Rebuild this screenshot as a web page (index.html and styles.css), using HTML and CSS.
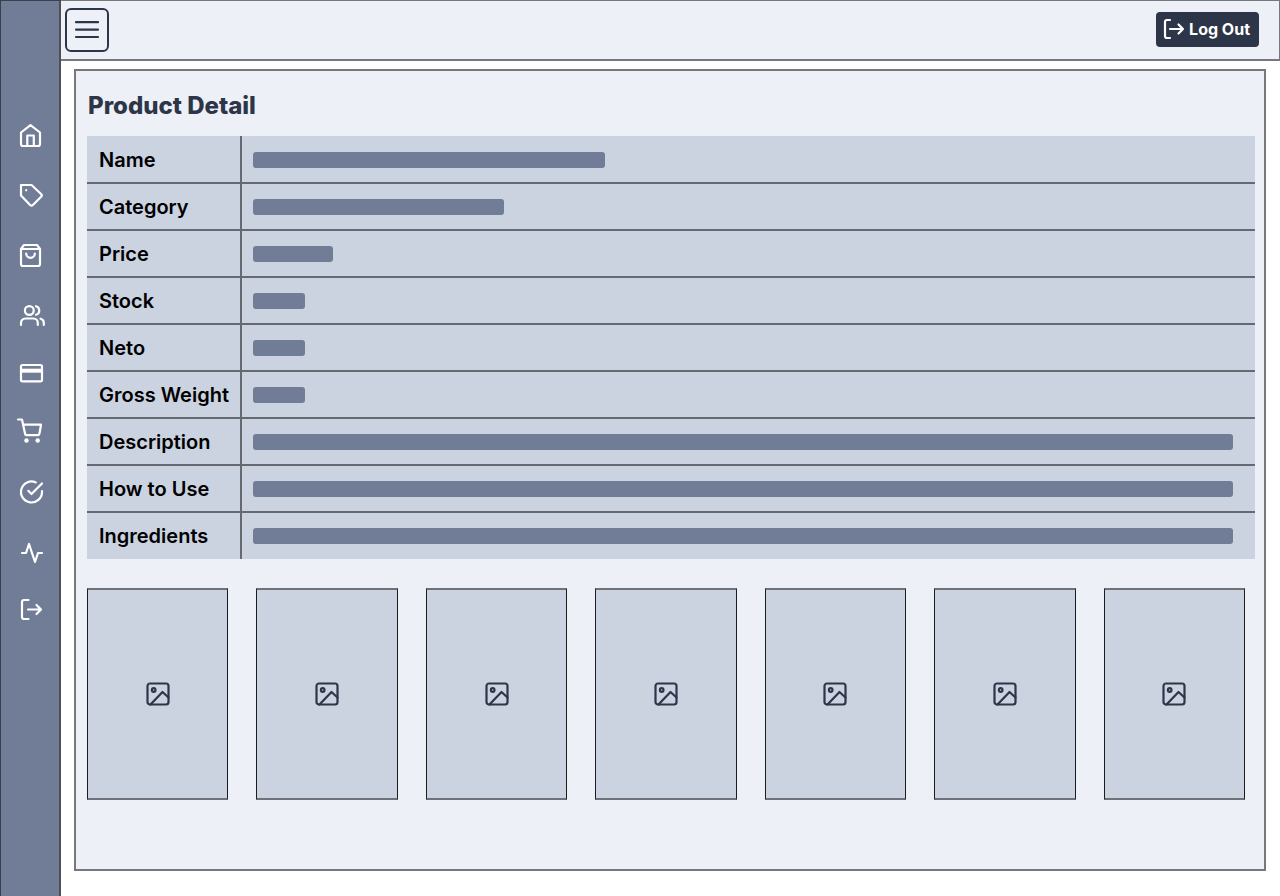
FILE: index.html
```html
<!DOCTYPE html>
<html lang="en">
<head>
<meta charset="utf-8">
<meta name="viewport" content="width=device-width, initial-scale=1">
<title>Product Detail</title>
<link rel="stylesheet" href="styles.css">
</head>
<body>
<div class="app">
  <nav class="sidebar" aria-label="Main">
    <a class="nav-link" href="#home" aria-label="Home"><svg class="nav-icon" viewBox="0 0 60 60"><path d="M21 27.500l9.500-7.300L40 27.500v11.500a2 2 0 0 1-2 2H23a2 2 0 0 1-2-2zM27.300 41V30.500h6.500V41"/></svg></a>
    <a class="nav-link" href="#tags" aria-label="Tags"><svg class="nav-icon" viewBox="0 0 60 60"><path d="M21 20h10.500l9.600 9a2 2 0 0 1 0 2.800l-8.200 8.200a2 2 0 0 1-2.800 0L21 30.500zM26.200 25.200v.1"/></svg></a>
    <a class="nav-link" href="#products" aria-label="Products"><svg class="nav-icon" viewBox="0 0 60 60"><path d="M24 20h13l3 4v15a2 2 0 0 1-2 2H23a2 2 0 0 1-2-2V24zM21 24h19M26.200 28.500a4.300 4.300 0 0 0 8.600 0"/></svg></a>
    <a class="nav-link" href="#customers" aria-label="Customers"><svg class="nav-icon" viewBox="0 0 60 60"><circle cx="29.300" cy="25.500" r="4.400"/><path d="M21 40v-2.200a4.300 4.300 0 0 1 4.300-4.300h8.200a4.300 4.300 0 0 1 4.300 4.300V40M36 21.200a4.400 4.400 0 0 1 0 8.500M40.500 33.700a4.300 4.300 0 0 1 3.300 4.200V40"/></svg></a>
    <a class="nav-link" href="#payments" aria-label="Payments"><svg class="nav-icon" viewBox="0 0 60 60"><rect x="21" y="20" width="21" height="16.300" rx="1.500"/><path class="stripe" d="M21 25.700h21"/></svg></a>
    <a class="nav-link" href="#cart" aria-label="Cart"><svg class="nav-icon" viewBox="0 0 60 60"><path d="M18 14.500h4l3 14a2 2 0 0 0 2 1.700h10.500a2 2 0 0 0 2-1.700L41 19.700H23"/><circle class="solid" cx="26.500" cy="35.500" r="2.200"/><circle class="solid" cx="37.700" cy="35.500" r="2.200"/></svg></a>
    <a class="nav-link" href="#approvals" aria-label="Approvals"><svg class="nav-icon" viewBox="0 0 60 60"><path d="M42 26v1a10.500 10.500 0 1 1-6.200-9.600M42 18.500L31.500 29l-3.200-3.200"/></svg></a>
    <a class="nav-link" href="#activity" aria-label="Activity"><svg class="nav-icon" viewBox="0 0 60 60"><path d="M22 28h4l3-9 6 18 3-9h4"/></svg></a>
    <a class="nav-link" href="#exit" aria-label="Exit"><svg class="nav-icon" viewBox="0 0 60 60"><path d="M28.500 15H24a2 2 0 0 0-2 2v15a2 2 0 0 0 2 2h4.500M28 24.500h13M36.500 20l4.500 4.500-4.500 4.500"/></svg></a>
  </nav>
  <div class="page">
    <header class="topbar">
      <button class="menu-button" type="button" aria-label="Menu"><svg width="26" height="26" viewBox="0 0 26 26"><path d="M2 5.200h22M2 12.600h22M2 20h22"/></svg></button>
      <button class="logout-button" type="button"><svg width="24" height="24" viewBox="0 0 24 24"><path d="M8 3H5a2 2 0 0 0-2 2v14a2 2 0 0 0 2 2h3M8 12h13M16.500 7.500L21 12l-4.500 4.500"/></svg>Log Out</button>
    </header>
    <main class="panel">
      <h1 class="title">Product Detail</h1>
      <table class="details">
        <tbody>
          <tr><th scope="row">Name</th><td><div class="bar bar-name"></div></td></tr>
          <tr><th scope="row">Category</th><td><div class="bar bar-category"></div></td></tr>
          <tr><th scope="row">Price</th><td><div class="bar bar-price"></div></td></tr>
          <tr><th scope="row">Stock</th><td><div class="bar bar-short"></div></td></tr>
          <tr><th scope="row">Neto</th><td><div class="bar bar-short"></div></td></tr>
          <tr><th scope="row">Gross Weight</th><td><div class="bar bar-short"></div></td></tr>
          <tr><th scope="row">Description</th><td><div class="bar"></div></td></tr>
          <tr><th scope="row">How to Use</th><td><div class="bar"></div></td></tr>
          <tr><th scope="row">Ingredients</th><td><div class="bar"></div></td></tr>
        </tbody>
      </table>
      <svg class="symbols" aria-hidden="true"><symbol id="picture" viewBox="0 0 26 26"><rect x="2.500" y="2.500" width="21" height="21" rx="2.500"/><circle cx="8.700" cy="9" r="1.800"/><path d="M23.500 16.500L17.500 11 5.500 23.500"/></symbol></svg>
      <div class="gallery">
        <div class="photo"><svg class="photo-icon"><use href="#picture"/></svg></div>
        <div class="photo"><svg class="photo-icon"><use href="#picture"/></svg></div>
        <div class="photo"><svg class="photo-icon"><use href="#picture"/></svg></div>
        <div class="photo"><svg class="photo-icon"><use href="#picture"/></svg></div>
        <div class="photo"><svg class="photo-icon"><use href="#picture"/></svg></div>
        <div class="photo"><svg class="photo-icon"><use href="#picture"/></svg></div>
        <div class="photo"><svg class="photo-icon"><use href="#picture"/></svg></div>
      </div>
    </main>
  </div>
</div>
</body>
</html>
```
FILE: styles.css
```css
* { box-sizing: border-box; }

body {
  margin: 0;
  background: #fff;
  color: #000;
  font-family: Inter, "Liberation Sans", sans-serif;
}

svg {
  display: block;
  fill: none;
  stroke: currentColor;
  stroke-width: 2.2;
  stroke-linecap: round;
  stroke-linejoin: round;
}

.app {
  display: flex;
  min-height: 100vh;
}

.sidebar {
  flex: none;
  width: 61px;
  padding-top: 104px;
  background: #717d96;
  border: 1px solid #393f4b;
  border-right: 2px solid #4b4f58;
  border-bottom: 0;
}

.nav-link {
  display: block;
  margin-left: -1px;
  color: #fff;
}

.nav-icon { width: 60px; height: 60px; }
.solid { fill: currentColor; stroke: none; }
.stripe { stroke-width: 4; stroke-linecap: butt; }

.page {
  flex: 1;
  min-width: 0;
  display: flex;
  flex-direction: column;
}

.topbar {
  display: flex;
  align-items: center;
  justify-content: space-between;
  height: 61px;
  padding: 0 20px 0 4px;
  background: #edf0f7;
  border: 1px solid #77787c;
  border-left: 0;
  border-bottom-width: 2px;
}

.menu-button {
  display: grid;
  place-items: center;
  width: 44px;
  height: 44px;
  padding: 0;
  border: 2px solid #2d3648;
  border-radius: 6px;
  background: transparent;
  color: #2d3648;
}

.logout-button {
  display: flex;
  align-items: center;
  gap: 3px;
  height: 35px;
  margin-bottom: 2px;
  padding: 0 9px 0 6px;
  border: 0;
  border-radius: 4px;
  background: #2d3648;
  color: #fff;
  font: 700 16px/24px Inter, "Liberation Sans", sans-serif;
}

.panel {
  flex: 1;
  margin: 8px 14px 25px 13px;
  padding: 20px 9px 20px 11px;
  background: #edf0f7;
  border: 2px solid #77787c;
}

.title {
  margin: 0 0 15px 1px;
  color: #2d3648;
  font-size: 24px;
  line-height: 30px;
  font-weight: 800;
}

.details {
  width: 100%;
  border-collapse: collapse;
  background: #cbd2e0;
}

.details th,
.details td {
  height: 47px;
  padding: 0 11px;
  border: 0 solid #666970;
}

.details tr + tr > * { border-top-width: 2px; }
.details tr:first-child > * { padding-top: 2px; }

.details th {
  width: 154px;
  border-right-width: 2px;
  padding-left: 12px;
  padding-right: 0;
  text-align: left;
  white-space: nowrap;
  font-size: 20px;
  line-height: 24px;
  font-weight: 600;
}

.details td { padding-right: 22px; }

.bar {
  height: 16px;
  border-radius: 3px;
  background: #717d96;
}

.bar-name { width: 352px; }
.bar-category { width: 251px; }
.bar-price { width: 80px; }
.bar-short { width: 52px; }

.symbols { width: 0; height: 0; }

.gallery {
  display: grid;
  grid-template-columns: repeat(7, 1fr);
  gap: 28px;
  margin: 29px 10px 0 0;
}

.photo {
  display: grid;
  place-items: center;
  height: 212px;
  background: #cbd2e0;
  border: 1px solid #1b1c1e;
  border-top: 2px solid #6e7177;
  border-bottom: 2px solid #6e7177;
}

.photo-icon {
  width: 26px;
  height: 26px;
  color: #2d3648;
}
```
